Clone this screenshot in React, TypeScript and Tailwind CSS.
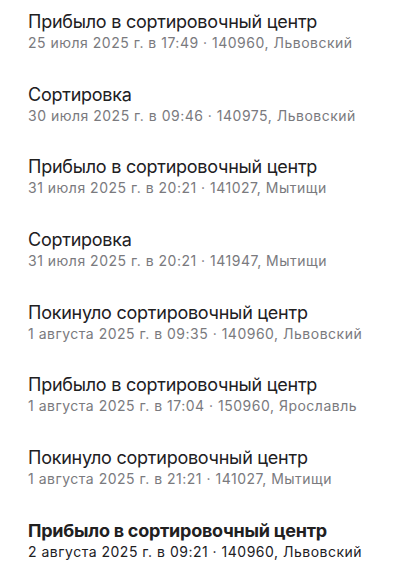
import React from 'react';

interface TrackEvent {
    title: string;
    date: string;
    place: string;
}

const events: TrackEvent[] = [
    { title: 'Прибыло в сортировочный центр', date: '25 июля 2025 г. в 17:49', place: '140960, Львовский' },
    { title: 'Сортировка', date: '30 июля 2025 г. в 09:46', place: '140975, Львовский' },
    { title: 'Прибыло в сортировочный центр', date: '31 июля 2025 г. в 20:21', place: '141027, Мытищи' },
    { title: 'Сортировка', date: '31 июля 2025 г. в 20:21', place: '141947, Мытищи' },
    { title: 'Покинуло сортировочный центр', date: '1 августа 2025 г. в 09:35', place: '140960, Львовский' },
    { title: 'Прибыло в сортировочный центр', date: '1 августа 2025 г. в 17:04', place: '150960, Ярославль' },
    { title: 'Покинуло сортировочный центр', date: '1 августа 2025 г. в 21:21', place: '141027, Мытищи' },
    { title: 'Прибыло в сортировочный центр', date: '2 августа 2025 г. в 09:21', place: '140960, Львовский' },
];

export default function App() {
    return (
        <div className="min-h-screen bg-white px-7 pt-[10px] font-['Inter',sans-serif]">
            <ul className="flex flex-col gap-[29.7px]">
                {events.map((ev, i) => {
                    const last = i === events.length - 1;
                    return (
                        <li key={i} className="flex flex-col">
                            <span className={`text-[18px] leading-[23px] tracking-[-0.25px] text-[#21201f] ${last ? 'font-bold' : ''}`}>
                                {ev.title}
                            </span>
                            <span className={`text-[14px] leading-[20px] tracking-[0.5px] ${last ? 'text-[#21201f]' : 'text-[#7a7a7e]'}`}>
                                {ev.date} · {ev.place}
                            </span>
                        </li>
                    );
                })}
            </ul>
        </div>
    );
}
